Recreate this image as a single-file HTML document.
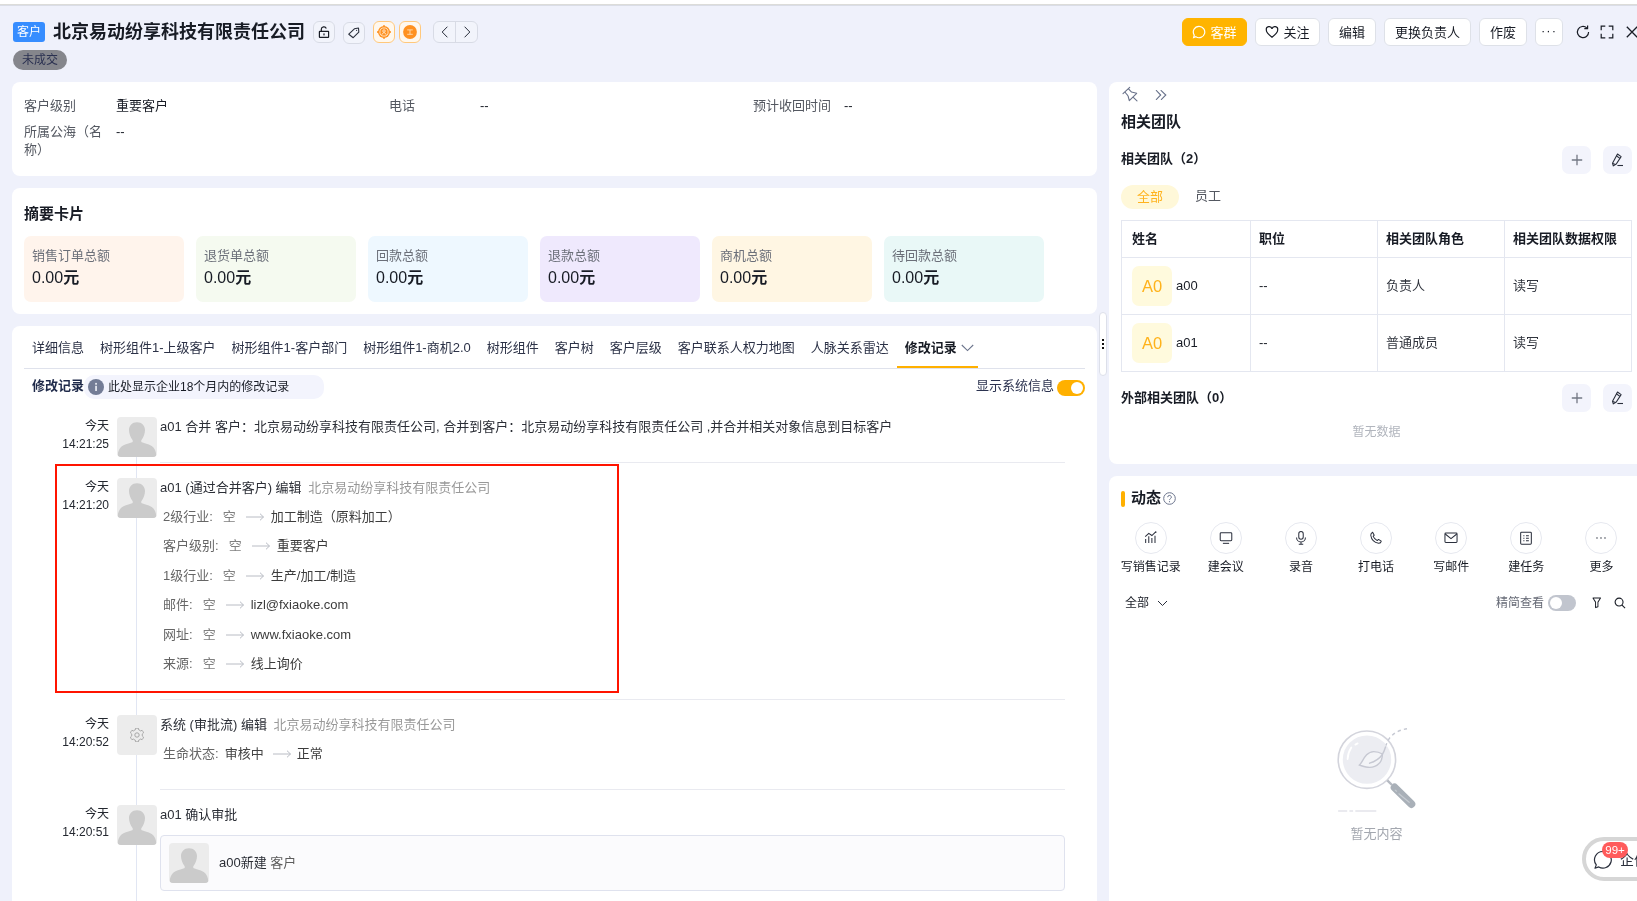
<!DOCTYPE html>
<html lang="zh-CN">
<head>
<meta charset="utf-8">
<title>客户详情</title>
<style>
*{box-sizing:border-box;margin:0;padding:0}
html,body{width:1637px;height:901px;overflow:hidden}
body{position:relative;background:#eff1fb;font-family:"Liberation Sans","Noto Sans CJK SC",sans-serif;font-size:13px;color:#181c25;-webkit-font-smoothing:antialiased}
.a{position:absolute}
.t{position:absolute;white-space:nowrap;height:20px;line-height:20px}
.card{position:absolute;background:#fff;border-radius:8px}
.g1{color:#545861}
.g2{color:#91959e}
.tl{color:#2b2e36}
.tl .g2{color:#999}
.b{font-weight:bold}
.f12{font-size:12px}
.btn{position:absolute;top:18px;height:28px;line-height:27px;border:1px solid #dee1e8;border-radius:6px;background:#fff;font-size:13px;text-align:center;color:#181c25;white-space:nowrap}
.ib{position:absolute;width:22px;height:22px;border:1px solid #d8dbe5;border-radius:6px;background:#f2f4fb}
.sbox{position:absolute;top:48px;width:160px;height:66px;border-radius:7px}
.sbox .l{position:absolute;left:8px;top:10px;height:20px;line-height:20px;font-size:13px;color:#6b6f79;white-space:nowrap}
.sbox .v{position:absolute;left:8px;top:31px;height:22px;line-height:22px;font-size:16px;color:#181c25;white-space:nowrap}
.tab{position:absolute;top:12px;height:20px;line-height:20px;font-size:13px;color:#2a304d;white-space:nowrap}
.av{position:absolute;width:40px;height:40px;border-radius:4px;background:#ececec;overflow:hidden}
.tm{position:absolute;left:40px;width:57px;text-align:right;font-size:12px;line-height:18px;height:18px;color:#23272f;white-space:nowrap}
.sep{position:absolute;left:148px;width:905px;height:1px;background:#e9eaf0}
.dl{position:absolute;left:151px;height:20px;line-height:20px;font-size:13px;white-space:nowrap;color:#3c3c3c}
.dl .k{color:#666}
.dl .o{color:#808080;margin-left:10px}
.dl .ar{display:inline-block;width:18px;height:8px;margin:0 7px 0 10px;vertical-align:0}
.sq{position:absolute;width:29px;height:28px;border-radius:7px;background:#f3f4fc}
.th{position:absolute;top:0;height:36px;line-height:36px;font-weight:bold;font-size:13px;white-space:nowrap}
.td{position:absolute;height:20px;line-height:20px;font-size:13px;white-space:nowrap}
.a0{position:absolute;left:10px;width:40px;height:40px;border-radius:7px;background:#fffadd;color:#ffb21a;font-size:16.500px;line-height:40px;text-align:center;font-weight:300;font-family:"Liberation Sans","Noto Sans CJK SC",sans-serif}
.act{position:absolute;top:46px;width:60px;text-align:center}
.act i{display:block;width:32px;height:32px;margin:0 auto;border:1px solid #e6e8ef;border-radius:50%;position:relative}
.act i svg{position:absolute;left:7px;top:7px}
.act span{display:block;margin-top:4px;font-size:12px;line-height:18px;height:18px;white-space:nowrap;color:#181c25}
#wrap{position:absolute;left:0;top:0;width:1637px;height:901px;overflow:hidden;will-change:transform}
</style>
</head>
<body>
<div id="wrap">
<!-- top strip -->
<div class="a" style="left:0;top:0;width:1637px;height:4px;background:#fff"></div>
<div class="a" style="left:0;top:4px;width:1637px;height:1px;background:#dcdcd9"></div>
<div class="a" style="left:0;top:5px;width:1637px;height:1px;background:#dadde6"></div>

<!-- HEADER -->
<div class="a" style="left:13px;top:22px;width:32px;height:20px;border-radius:3px;background:#368dff;color:#fff;font-size:12px;line-height:20px;text-align:center">客户</div>
<div class="t b" style="left:53px;top:19px;height:26px;line-height:26px;font-size:18px">北京易动纷享科技有限责任公司</div>
<div class="a" style="left:13px;top:50px;width:54px;height:20px;border-radius:10px;background:#85868c;color:#2a3050;font-size:12px;line-height:20px;text-align:center">未成交</div>

<!-- header icon buttons -->
<div class="ib" style="left:313px;top:21px"><svg class="a" style="left:4px;top:3px" width="12" height="14" viewBox="0 0 12 14" fill="none" stroke="#181c25" stroke-width="1.200"><path d="M3.300 6.300V4.300a2.600 2.600 0 0 1 5-.900"/><rect x="1.400" y="6.300" width="9.200" height="6.100" rx=".400"/><rect x="5.400" y="8.400" width="1.200" height="2" fill="#181c25" stroke="none"/></svg></div>
<div class="ib" style="left:343px;top:22px"><svg class="a" style="left:3px;top:3px" width="14" height="14" viewBox="0 0 14 14" fill="none" stroke="#2a2f3c" stroke-width="1.100" stroke-linejoin="round"><path d="M1.800 8.200 7.400 2.800l4.100-.800.300 4.200-5.600 5.500z"/><circle cx="9.6" cy="4.3" r=".6" fill="#2a2f3c" stroke="none"/></svg></div>
<div class="ib" style="left:373px;top:21px;border-color:#ffc87c;background:#fff8ee"><svg class="a" style="left:3px;top:3px" width="14" height="14" viewBox="0 0 14 14" fill="none"><circle cx="7" cy="7" r="6" fill="#ff9120"/><path d="M7 .200v1.500M7 12.300v1.500M.200 7h1.500M12.300 7h1.500" stroke="#ff9120" stroke-width="1.800"/><circle cx="7" cy="7" r="4.100" fill="none" stroke="#fff3e2" stroke-width=".800"/><circle cx="7" cy="6" r="1.250" fill="none" stroke="#fff3e2" stroke-width=".800"/><path d="M4.900 9.700c.300-1.300 1.100-1.900 2.100-1.900s1.800.600 2.100 1.900" stroke="#fff3e2" stroke-width=".800"/></svg></div>
<div class="ib" style="left:399px;top:21px;border-color:#ffc87c;background:#fff8ee"><svg class="a" style="left:3px;top:3px" width="14" height="14" viewBox="0 0 14 14" fill="none"><circle cx="7" cy="7" r="6.9" fill="#ff9120"/><path d="M4.200 4.900h5.600M4.200 9.300h5.600M7 4.900v4.400" stroke="#ffdcb3" stroke-width=".900"/></svg></div>
<div class="a" style="left:433px;top:21px;width:45px;height:22px;border:1px solid #d8dbe5;border-radius:6px;background:#f2f4fb"><div class="a" style="left:21px;top:0;width:1px;height:20px;background:#d8dbe5"></div><svg class="a" style="left:7px;top:4px" width="8" height="12" viewBox="0 0 8 12" fill="none" stroke="#2a2f3c" stroke-width="1"><path d="M6.400 .700 1.200 6 6.400 11.300"/></svg><svg class="a" style="left:29px;top:4px" width="8" height="12" viewBox="0 0 8 12" fill="none" stroke="#2a2f3c" stroke-width="1"><path d="M1.600 .700 6.800 6 1.600 11.300"/></svg></div>

<!-- header action buttons -->
<div class="btn" style="left:1182px;width:65px;background:#ffb400;border-color:#ffb400;color:#fff"><svg style="display:inline-block;vertical-align:-2px;margin-right:4px" width="14" height="14" viewBox="0 0 13 13" fill="none" stroke="#fff" stroke-width="1.1"><path d="M6.5 1.2a5.3 5.3 0 1 1-2.9 9.7L1.5 11.6l.6-2.2A5.3 5.3 0 0 1 6.500 1.2z"/></svg>客群</div>
<div class="btn" style="left:1255px;width:65px"><svg style="display:inline-block;vertical-align:-2px;margin-right:4px" width="14" height="14" viewBox="0 0 13 13" fill="none" stroke="#181c25" stroke-width="1.1"><path d="M6.5 11.3C3.500 9 1.200 7 1.200 4.600a2.700 2.700 0 0 1 5.300-1 2.700 2.700 0 0 1 5.300 1c0 2.400-2.300 4.400-5.300 6.700z"/></svg>关注</div>
<div class="btn" style="left:1328px;width:48px">编辑</div>
<div class="btn" style="left:1384px;width:87px">更换负责人</div>
<div class="btn" style="left:1479px;width:48px">作废</div>
<div class="btn" style="left:1535px;width:28px;letter-spacing:1px;line-height:24px">···</div>
<svg class="a" style="left:1576px;top:25px" width="14" height="14" viewBox="0 0 14 14" fill="none" stroke="#181c25" stroke-width="1.2"><path d="M12.600 7a5.600 5.600 0 1 1-1.800-4.100"/><path d="M11.600.400v3.300H8.300" stroke-linejoin="round"/></svg>
<svg class="a" style="left:1600px;top:25px" width="14" height="14" viewBox="0 0 14 14" fill="none" stroke="#181c25" stroke-width="1.2"><path d="M1.200 5.300V1.200h4.100M8.700 1.200h4.100v4.100M12.800 8.700v4.100H8.700M5.300 12.800H1.200V8.700"/></svg>
<svg class="a" style="left:1626px;top:26px" width="12" height="12" viewBox="0 0 12 12" fill="none" stroke="#181c25" stroke-width="1.3"><path d="M.8.8l10.400 10.400M11.200.8.8 11.200"/></svg>


<!-- LEFT CARD 1 -->
<div class="card" id="c1" style="left:12px;top:82px;width:1085px;height:94px">
<div class="t g1" style="left:12px;top:14px">客户级别</div><div class="t" style="left:104px;top:14px">重要客户</div>
<div class="t g1" style="left:377px;top:14px">电话</div><div class="t" style="left:468px;top:14px">--</div>
<div class="t g1" style="left:741px;top:14px">预计收回时间</div><div class="t" style="left:832px;top:14px">--</div>
<div class="a g1" style="left:12px;top:41px;width:86px;line-height:18px">所属公海（名称）</div><div class="t" style="left:104px;top:40px">--</div>
</div>
<!-- LEFT CARD 2 -->
<div class="card" id="c2" style="left:12px;top:188px;width:1085px;height:126px">
<div class="t b" style="left:12px;top:15px;height:22px;line-height:22px;font-size:15px">摘要卡片</div>
<div class="sbox" style="left:12px;background:#fff4ec"><div class="l">销售订单总额</div><div class="v">0.00<b>元</b></div></div>
<div class="sbox" style="left:184px;background:#f5faf0"><div class="l">退货单总额</div><div class="v">0.00<b>元</b></div></div>
<div class="sbox" style="left:356px;background:#eef8ff"><div class="l">回款总额</div><div class="v">0.00<b>元</b></div></div>
<div class="sbox" style="left:528px;background:#efe9fd"><div class="l">退款总额</div><div class="v">0.00<b>元</b></div></div>
<div class="sbox" style="left:700px;background:#fff6e3"><div class="l">商机总额</div><div class="v">0.00<b>元</b></div></div>
<div class="sbox" style="left:872px;background:#e9f8f7"><div class="l">待回款总额</div><div class="v">0.00<b>元</b></div></div>
</div>
<!-- LEFT CARD 3 -->
<div class="card" id="c3" style="left:12px;top:326px;width:1085px;height:600px;border-radius:8px 8px 0 0">
<div class="a" style="left:12px;top:12px;height:20px;display:flex"><div style="padding:0 8px;height:20px;line-height:20px;font-size:13px;color:#2c3247;white-space:nowrap">详细信息</div><div style="padding:0 8px;height:20px;line-height:20px;font-size:13px;color:#2c3247;white-space:nowrap">树形组件1-上级客户</div><div style="padding:0 8px;height:20px;line-height:20px;font-size:13px;color:#2c3247;white-space:nowrap">树形组件1-客户部门</div><div style="padding:0 8px;height:20px;line-height:20px;font-size:13px;color:#2c3247;white-space:nowrap">树形组件1-商机2.0</div><div style="padding:0 8px;height:20px;line-height:20px;font-size:13px;color:#2c3247;white-space:nowrap">树形组件</div><div style="padding:0 8px;height:20px;line-height:20px;font-size:13px;color:#2c3247;white-space:nowrap">客户树</div><div style="padding:0 8px;height:20px;line-height:20px;font-size:13px;color:#2c3247;white-space:nowrap">客户层级</div><div style="padding:0 8px;height:20px;line-height:20px;font-size:13px;color:#2c3247;white-space:nowrap">客户联系人权力地图</div><div style="padding:0 8px;height:20px;line-height:20px;font-size:13px;color:#2c3247;white-space:nowrap">人脉关系雷达</div><div class="b" style="padding:0 0 0 8px;height:20px;line-height:20px;font-size:13px;color:#181c25;white-space:nowrap">修改记录</div></div>
<svg class="a" style="left:949px;top:18px" width="13" height="8" viewBox="0 0 13 8" fill="none" stroke="#6b748c" stroke-width="1.1"><path d="M.800 1 6.500 6.600 12.200 1"/></svg>
<div class="a" style="left:12px;top:42px;width:1061px;height:1px;background:#dfe2ec"></div>
<div class="a" style="left:885px;top:40px;width:81px;height:2px;background:#ffb000"></div>
<div class="t b" style="left:20px;top:50px;color:#1f2a4a">修改记录</div>
<div class="a" style="left:72px;top:49px;width:240px;height:24px;border-radius:10px;background:#f3f4fd"></div>
<svg class="a" style="left:76px;top:53px" width="16" height="16" viewBox="0 0 16 16"><circle cx="8" cy="8" r="8" fill="#737c96"/><rect x="7.200" y="6.800" width="1.700" height="5.200" fill="#e9ebf3"/><rect x="7.200" y="3.900" width="1.700" height="1.800" fill="#e9ebf3"/></svg>
<div class="t f12" style="left:96px;top:51px">此处显示企业18个月内的修改记录</div>
<div class="t" style="left:964px;top:50px;color:#2c3350">显示系统信息</div>
<div class="a" style="left:1045px;top:54px;width:28px;height:16px;border-radius:8px;background:#ffb000"><div class="a" style="left:14px;top:2px;width:12px;height:12px;border-radius:6px;background:#fff"></div></div>
<div class="a" style="left:124px;top:131px;width:1px;height:480px;background:#e1e6f3"></div>
<div class="tm" style="top:91px">今天</div><div class="tm" style="top:109px">14:21:25</div><div class="av" style="left:105px;top:91px"><svg width="40" height="40" viewBox="0 0 40 40"><path fill="#cbcbcb" d="M20 5.200C24.800 5.200 28 8.600 28 13C28 17 26.500 20.300 24.300 23.300L24.300 25C27.500 26.600 33 27 36 30C38 32 39.200 35 39.200 38C39.200 39.300 38.500 40 37.500 40L2.500 40C1.500 40 .800 39.300 .800 38C.800 35 2 32 4 30C7 27 12.500 26.600 15.700 25L15.700 23.300C13.500 20.300 12 17 12 13C12 8.600 15.200 5.200 20 5.200Z"/></svg></div>
<div class="t tl" style="left:148px;top:91px">a01 合并 客户：北京易动纷享科技有限责任公司, 合并到客户：北京易动纷享科技有限责任公司 ,并合并相关对象信息到目标客户</div>
<div class="sep" style="top:136px"></div>
<div class="tm" style="top:152px">今天</div><div class="tm" style="top:170px">14:21:20</div><div class="av" style="left:105px;top:152px"><svg width="40" height="40" viewBox="0 0 40 40"><path fill="#cbcbcb" d="M20 5.200C24.800 5.200 28 8.600 28 13C28 17 26.500 20.300 24.300 23.300L24.300 25C27.500 26.600 33 27 36 30C38 32 39.200 35 39.200 38C39.200 39.300 38.500 40 37.500 40L2.500 40C1.500 40 .800 39.300 .800 38C.800 35 2 32 4 30C7 27 12.500 26.600 15.700 25L15.700 23.300C13.500 20.300 12 17 12 13C12 8.600 15.200 5.200 20 5.200Z"/></svg></div>
<div class="t tl" style="left:148px;top:152px">a01 (通过合并客户) 编辑 <span class="g2" style="margin-left:3px">北京易动纷享科技有限责任公司</span></div>
<div class="dl" style="top:180.7px"><span class="k">2级行业:</span><span class="o">空</span><svg class="ar" viewBox="0 0 18 8" fill="none" stroke="#b9bcc4" stroke-width="1"><path d="M0 4h17.500M14 .700 17.500 4l-3.500 3.300"/></svg>加工制造（原料加工）</div>
<div class="dl" style="top:210.2px"><span class="k">客户级别:</span><span class="o">空</span><svg class="ar" viewBox="0 0 18 8" fill="none" stroke="#b9bcc4" stroke-width="1"><path d="M0 4h17.500M14 .700 17.500 4l-3.500 3.300"/></svg>重要客户</div>
<div class="dl" style="top:239.7px"><span class="k">1级行业:</span><span class="o">空</span><svg class="ar" viewBox="0 0 18 8" fill="none" stroke="#b9bcc4" stroke-width="1"><path d="M0 4h17.500M14 .700 17.500 4l-3.500 3.300"/></svg>生产/加工/制造</div>
<div class="dl" style="top:269.2px"><span class="k">邮件:</span><span class="o">空</span><svg class="ar" viewBox="0 0 18 8" fill="none" stroke="#b9bcc4" stroke-width="1"><path d="M0 4h17.500M14 .700 17.500 4l-3.500 3.300"/></svg>lizl@fxiaoke.com</div>
<div class="dl" style="top:298.7px"><span class="k">网址:</span><span class="o">空</span><svg class="ar" viewBox="0 0 18 8" fill="none" stroke="#b9bcc4" stroke-width="1"><path d="M0 4h17.500M14 .700 17.500 4l-3.500 3.300"/></svg>www.fxiaoke.com</div>
<div class="dl" style="top:328.2px"><span class="k">来源:</span><span class="o">空</span><svg class="ar" viewBox="0 0 18 8" fill="none" stroke="#b9bcc4" stroke-width="1"><path d="M0 4h17.500M14 .700 17.500 4l-3.500 3.300"/></svg>线上询价</div>
<div class="sep" style="top:373px"></div>
<div class="tm" style="top:389px">今天</div><div class="tm" style="top:407px">14:20:52</div><div class="av" style="left:105px;top:389px"><svg class="a" style="left:13px;top:13px" width="14" height="14" viewBox="0 0 14 14" fill="none" stroke="#a6a6a6" stroke-width="1" stroke-linejoin="round"><path d="M5.57 0.25A6.9 6.9 0 0 1 8.43 0.25L8.85 2.03A5.3 5.3 0 0 1 10.38 2.92L12.13 2.38A6.9 6.9 0 0 1 13.56 4.87L12.23 6.12A5.3 5.3 0 0 1 12.23 7.88L13.56 9.13A6.9 6.9 0 0 1 12.13 11.62L10.38 11.08A5.3 5.3 0 0 1 8.85 11.97L8.43 13.75A6.9 6.9 0 0 1 5.57 13.75L5.15 11.97A5.3 5.3 0 0 1 3.62 11.08L1.87 11.62A6.9 6.9 0 0 1 0.44 9.13L1.77 7.88A5.3 5.3 0 0 1 1.77 6.12L0.44 4.87A6.9 6.9 0 0 1 1.87 2.38L3.62 2.92A5.3 5.3 0 0 1 5.15 2.03Z"/><circle cx="7" cy="7" r="2.200"/></svg></div>
<div class="t tl" style="left:148px;top:389px">系统 (审批流) 编辑 <span class="g2" style="margin-left:3px">北京易动纷享科技有限责任公司</span></div>
<div class="dl" style="top:418.2px"><span class="k">生命状态:</span><span style="margin-left:6px;color:#444">审核中</span><svg class="ar" style="margin-left:9px;margin-right:6px" viewBox="0 0 18 8" fill="none" stroke="#b9bcc4" stroke-width="1"><path d="M0 4h17.500M14 .700 17.500 4l-3.500 3.300"/></svg>正常</div>
<div class="sep" style="top:463px"></div>
<div class="tm" style="top:479px">今天</div><div class="tm" style="top:497px">14:20:51</div><div class="av" style="left:105px;top:479px"><svg width="40" height="40" viewBox="0 0 40 40"><path fill="#cbcbcb" d="M20 5.200C24.800 5.200 28 8.600 28 13C28 17 26.500 20.300 24.300 23.300L24.300 25C27.500 26.600 33 27 36 30C38 32 39.200 35 39.200 38C39.200 39.300 38.500 40 37.500 40L2.500 40C1.500 40 .800 39.300 .800 38C.800 35 2 32 4 30C7 27 12.500 26.600 15.700 25L15.700 23.300C13.500 20.300 12 17 12 13C12 8.600 15.200 5.200 20 5.200Z"/></svg></div>
<div class="t tl" style="left:148px;top:479px">a01 确认审批</div>
<div class="a" style="left:148px;top:509px;width:905px;height:56px;border:1px solid #dfe2ee;border-radius:4px;background:#fbfbfd"><div class="av" style="left:8px;top:7px"><svg width="40" height="40" viewBox="0 0 40 40"><path fill="#cbcbcb" d="M20 5.200C24.800 5.200 28 8.600 28 13C28 17 26.500 20.300 24.300 23.300L24.300 25C27.500 26.600 33 27 36 30C38 32 39.200 35 39.200 38C39.200 39.300 38.500 40 37.500 40L2.500 40C1.500 40 .800 39.300 .800 38C.800 35 2 32 4 30C7 27 12.500 26.600 15.700 25L15.700 23.300C13.500 20.300 12 17 12 13C12 8.600 15.200 5.200 20 5.200Z"/></svg></div><div class="t tl" style="left:58px;top:17px">a00新建 <span style="color:#5c5c5c">客户</span></div></div>
<div class="a" style="left:43px;top:138px;width:564px;height:229px;border:2px solid #ff1400"></div>
</div>
<!-- RIGHT CARD 1 -->
<div class="card" id="r1" style="left:1109px;top:82px;width:540px;height:382px;border-radius:8px 0 0 8px">
<svg class="a" style="left:13px;top:4px" width="17" height="17" viewBox="0 0 17 17" fill="none" stroke="#687189" stroke-width="1.100" stroke-linejoin="round" stroke-linecap="round"><path d="M1 7.700 7.700 1.300M3 6C4.500 8.500 6.500 9.300 6.200 10.500L7.300 14.700 14.700 7.300 10.500 6.200C9.300 6.500 8.500 4.500 6.300 2.700M11.300 11.300 15 14.800"/></svg>
<svg class="a" style="left:46px;top:8px" width="12" height="10" viewBox="0 0 12 10" fill="none" stroke="#667089" stroke-width="1.100"><path d="M1 .200 5.700 5 1 9.800M5.700 .200 10.800 5 6 9.800"/></svg>
<div class="t b" style="left:12px;top:29px;height:22px;line-height:22px;font-size:15px">相关团队</div>
<div class="t b" style="left:12px;top:67px">相关团队（2）</div>
<div class="sq" style="left:453px;top:64px"><svg class="a" style="left:9px;top:8px" width="12" height="12" viewBox="0 0 12 12" stroke="#737884" stroke-width="1.300"><path d="M6 .800v10.400M.800 6h10.400"/></svg></div><div class="sq" style="left:494px;top:64px"><svg class="a" style="left:0;top:0" width="29" height="28" viewBox="0 0 29 28" fill="none" stroke="#2a2f3c" stroke-width="1.100" stroke-linejoin="round"><path d="M14.500 8 18.100 10.600 13.300 18 10.300 19.900 9.500 17.200Z"/><path d="M13.300 9.800 16.900 12.400M9.700 17.400 12.600 18.400"/><path d="M14.400 19.500h5.600"/></svg></div>
<div class="a" style="left:12px;top:103px;width:58px;height:24px;border-radius:12px;background:#fff8d9;color:#ffb31f;font-size:13px;line-height:23px;text-align:center">全部</div>
<div class="t g1" style="left:86px;top:104px">员工</div>
<div class="a" id="tbl" style="left:12px;top:138px;width:511px;height:152px;border:1px solid #e4e7f0">
<div class="a" style="left:128px;top:0;width:1px;height:150px;background:#e4e7f0"></div><div class="a" style="left:255px;top:0;width:1px;height:150px;background:#e4e7f0"></div><div class="a" style="left:382px;top:0;width:1px;height:150px;background:#e4e7f0"></div><div class="a" style="left:0;top:36px;width:509px;height:1px;background:#e4e7f0"></div><div class="a" style="left:0;top:93px;width:509px;height:1px;background:#e4e7f0"></div>
<div class="th" style="left:10px">姓名</div><div class="th" style="left:137px">职位</div><div class="th" style="left:264px">相关团队角色</div><div class="th" style="left:391px">相关团队数据权限</div>
<div class="a0" style="top:45px">A0</div><div class="td" style="left:54px;top:55px">a00</div><div class="td" style="left:137px;top:55px">--</div><div class="td" style="left:264px;top:55px;color:#30343d">负责人</div><div class="td" style="left:391px;top:55px;color:#30343d">读写</div>
<div class="a0" style="top:102px">A0</div><div class="td" style="left:54px;top:112px">a01</div><div class="td" style="left:137px;top:112px">--</div><div class="td" style="left:264px;top:112px;color:#30343d">普通成员</div><div class="td" style="left:391px;top:112px;color:#30343d">读写</div>
</div>
<div class="t b" style="left:12px;top:306px">外部相关团队（0）</div>
<div class="sq" style="left:453px;top:302px"><svg class="a" style="left:9px;top:8px" width="12" height="12" viewBox="0 0 12 12" stroke="#737884" stroke-width="1.300"><path d="M6 .800v10.400M.800 6h10.400"/></svg></div><div class="sq" style="left:494px;top:302px"><svg class="a" style="left:0;top:0" width="29" height="28" viewBox="0 0 29 28" fill="none" stroke="#2a2f3c" stroke-width="1.100" stroke-linejoin="round"><path d="M14.500 8 18.100 10.600 13.300 18 10.300 19.900 9.500 17.200Z"/><path d="M13.300 9.800 16.900 12.400M9.700 17.400 12.600 18.400"/><path d="M14.400 19.500h5.600"/></svg></div>
<div class="t f12" style="left:12px;top:340px;width:511px;text-align:center;color:#b1b5bd">暂无数据</div>
</div>
<!-- RIGHT CARD 2 -->
<div class="card" id="r2" style="left:1109px;top:476px;width:540px;height:440px;border-radius:8px 0 0 0">
<div class="a" style="left:12px;top:15px;width:4px;height:16px;border-radius:2px;background:#ffb000"></div>
<div class="t b" style="left:22px;top:11px;height:22px;line-height:22px;font-size:15px">动态</div>
<svg class="a" style="left:54px;top:16px" width="13" height="13" viewBox="0 0 13 13" fill="none" stroke="#6b748c" stroke-width="1"><circle cx="6.500" cy="6.500" r="5.800"/><path d="M4.700 5.200a1.800 1.800 0 1 1 2.600 1.600c-.600.300-.800.700-.800 1.300" stroke-width="1"/><circle cx="6.500" cy="9.700" r=".600" fill="#6b748c" stroke="none"/></svg>
<div class="act" style="left:11.70px"><i><svg width="16" height="16" viewBox="0 0 18 18" fill="none" stroke="#2a2f3c" stroke-width="1.150"><path d="M3 14.500V10M6.500 14.500V7M10 14.500V9M13.500 14.500V6.500"/><path d="M2.500 7.500 6.500 3.800 10 6.200 14 2.500"/><circle cx="14.300" cy="2.400" r=".900" fill="#2a2f3c" stroke="none"/></svg></i><span>写销售记录</span></div>
<div class="act" style="left:86.83px"><i><svg width="16" height="16" viewBox="0 0 18 18" fill="none" stroke="#2a2f3c" stroke-width="1.150"><rect x="2.500" y="3" width="13" height="9" rx="1"/><path d="M5.500 15h7"/></svg></i><span>建会议</span></div>
<div class="act" style="left:161.96px"><i><svg width="16" height="16" viewBox="0 0 18 18" fill="none" stroke="#2a2f3c" stroke-width="1.150"><rect x="6.500" y="1.800" width="5" height="8.600" rx="2.500"/><path d="M4 8.500a5 5 0 0 0 10 0M9 13.500V16M6.500 16h5"/></svg></i><span>录音</span></div>
<div class="act" style="left:237.09px"><i><svg width="16" height="16" viewBox="0 0 18 18" fill="none" stroke="#2a2f3c" stroke-width="1.150"><path d="M5.200 2.600 7 5.800 5.800 7.200c.900 2 2.400 3.500 4.600 4.700l1.400-1.300 3.100 1.900c-.300 1.700-1.300 2.600-2.900 2.500-4.800-.800-8.200-4.400-8.900-9.100 0-1.500.700-2.600 2.100-3.300z" stroke-linejoin="round"/></svg></i><span>打电话</span></div>
<div class="act" style="left:312.22px"><i><svg width="16" height="16" viewBox="0 0 18 18" fill="none" stroke="#2a2f3c" stroke-width="1.150"><rect x="2.200" y="3.500" width="13.600" height="10.500" rx="1"/><path d="M2.500 4.500 9 9.800 15.500 4.500"/></svg></i><span>写邮件</span></div>
<div class="act" style="left:387.35px"><i><svg width="16" height="16" viewBox="0 0 18 18" fill="none" stroke="#2a2f3c" stroke-width="1.150"><rect x="3" y="2.500" width="12" height="13.500" rx="1"/><path d="M6 6.500h1.200M9 6.500h3.200M6 9.300h1.200M9 9.300h3.200M6 12.100h1.200M9 12.100h3.200"/></svg></i><span>建任务</span></div>
<div class="act" style="left:462.48px"><i><svg width="16" height="16" viewBox="0 0 18 18" fill="none" stroke="#2a2f3c" stroke-width="1.150"><circle cx="4.500" cy="9" r=".800" fill="#2a2f3c" stroke="none"/><circle cx="9" cy="9" r=".800" fill="#2a2f3c" stroke="none"/><circle cx="13.500" cy="9" r=".800" fill="#2a2f3c" stroke="none"/></svg></i><span>更多</span></div>
<div class="t f12" style="left:16px;top:118px;height:18px;line-height:18px">全部</div>
<svg class="a" style="left:48px;top:124px" width="11" height="7" viewBox="0 0 11 7" fill="none" stroke="#2a2f3c" stroke-width="1"><path d="M1 1 5.500 5.500 10 1"/></svg>
<div class="t f12" style="left:387px;top:118px;height:18px;line-height:18px;color:#666a76">精简查看</div>
<div class="a" style="left:439px;top:119px;width:28px;height:16px;border-radius:8px;background:#c1c5ce"><div class="a" style="left:2px;top:2px;width:12px;height:12px;border-radius:6px;background:#fff"></div></div>
<svg class="a" style="left:482.500px;top:121px" width="9.500" height="11.500" viewBox="0 0 12 13" preserveAspectRatio="none" fill="none" stroke="#181c25" stroke-width="1.200" stroke-linejoin="round"><path d="M1.200 1.200h9.600L7.500 5.800V11L4.500 12V5.800Z"/></svg>
<svg class="a" style="left:505px;top:121px" width="12" height="12" viewBox="0 0 13 13" fill="none" stroke="#181c25" stroke-width="1.200"><circle cx="5.500" cy="5.500" r="4.300"/><path d="M8.700 8.700 12 12"/></svg>
<svg class="a" style="left:221px;top:244px" width="100" height="100" viewBox="0 0 100 100" fill="none">
<circle cx="36.900" cy="39.700" r="28.700" fill="#fff" stroke="#d3d4dc" stroke-width="1.600"/>
<circle cx="37" cy="39.600" r="24.200" fill="#ecedf2"/>
<path d="M17.600 39C17.800 34.500 19.200 30.500 21.300 27.400" stroke="#fff" stroke-width="1.800" stroke-linecap="round"/>
<path d="M25.400 24.600 27.600 23.400" stroke="#fff" stroke-width="1.800" stroke-linecap="round"/>
<path d="M29.200 45.100C32.500 43.500 34.500 31.800 43.800 31.600C47.500 31.600 50 32.500 52.400 34C52.300 39 51 42 48.700 43.800C45.500 47 41 48 36 47C33 46.500 31 45.500 29.200 45.100Z" fill="#f3f4f7" stroke="#c6c8d2" stroke-width="1.400" stroke-linejoin="round"/>
<path d="M39.600 43.200C45 41.500 49.500 38.500 52 35C53.500 32.800 54.500 30.500 55.500 27" stroke="#c6c8d2" stroke-width="1.400" stroke-linecap="round"/>
<path d="M56 25.500C58.500 16.500 65.500 10.500 77 8.800" stroke="#c6c9d3" stroke-width="1.400" stroke-dasharray="3.400 3.200" stroke-dashoffset="1"/>
<path d="M57.300 60.300 62 65" stroke="#b5bac2" stroke-width="2.400"/>
<path d="M64.600 67.400 81.400 84.100" stroke="#a9b0b8" stroke-width="7.800" stroke-linecap="round"/>
<path d="M65.200 70.100 66.600 71.200M68.900 73.800 79.200 82.300" stroke="#c6cbd1" stroke-width="1.200" stroke-linecap="round"/>
<path d="M8.100 91.100h9.100M19.400 91.100h3.700M25.300 91.100h21" stroke="#e3e4ea" stroke-width="1.500"/>
</svg>
<div class="t" style="left:12px;top:348px;width:511px;text-align:center;color:#a3a7af">暂无内容</div>
<div class="a" style="left:473px;top:361px;width:90px;height:44px;border-radius:22px;border:4px solid #d6d6d6;background:#fff"></div>
<svg class="a" style="left:484px;top:374px" width="20" height="20" viewBox="0 0 20 20" fill="none" stroke="#2a2f3c" stroke-width="1.200" stroke-linejoin="round"><path d="M10 1.500a8.300 8.300 0 1 1-4.300 15.400L2 18.200l1.300-3.300A8.300 8.300 0 0 1 10 1.500z"/></svg>
<div class="t" style="left:511px;top:373px;height:22px;line-height:22px;font-size:14px;color:#2a2f3c">企信</div>
<div class="a" style="left:493px;top:366px;width:26px;height:16px;border-radius:8px;background:#ff5b5b;color:#fff;font-size:11.500px;line-height:16px;text-align:center">99+</div>
</div>
<!-- splitter handle -->
<div class="a" style="left:1099px;top:312px;width:8px;height:64px;border:1px solid #dcdfe9;border-radius:4px;background:#fff"><div class="a" style="left:2px;top:26px;width:2px;height:2px;background:#111"></div><div class="a" style="left:2px;top:30px;width:2px;height:2px;background:#111"></div><div class="a" style="left:2px;top:34px;width:2px;height:2px;background:#111"></div></div>
</div>
</body>
</html>
